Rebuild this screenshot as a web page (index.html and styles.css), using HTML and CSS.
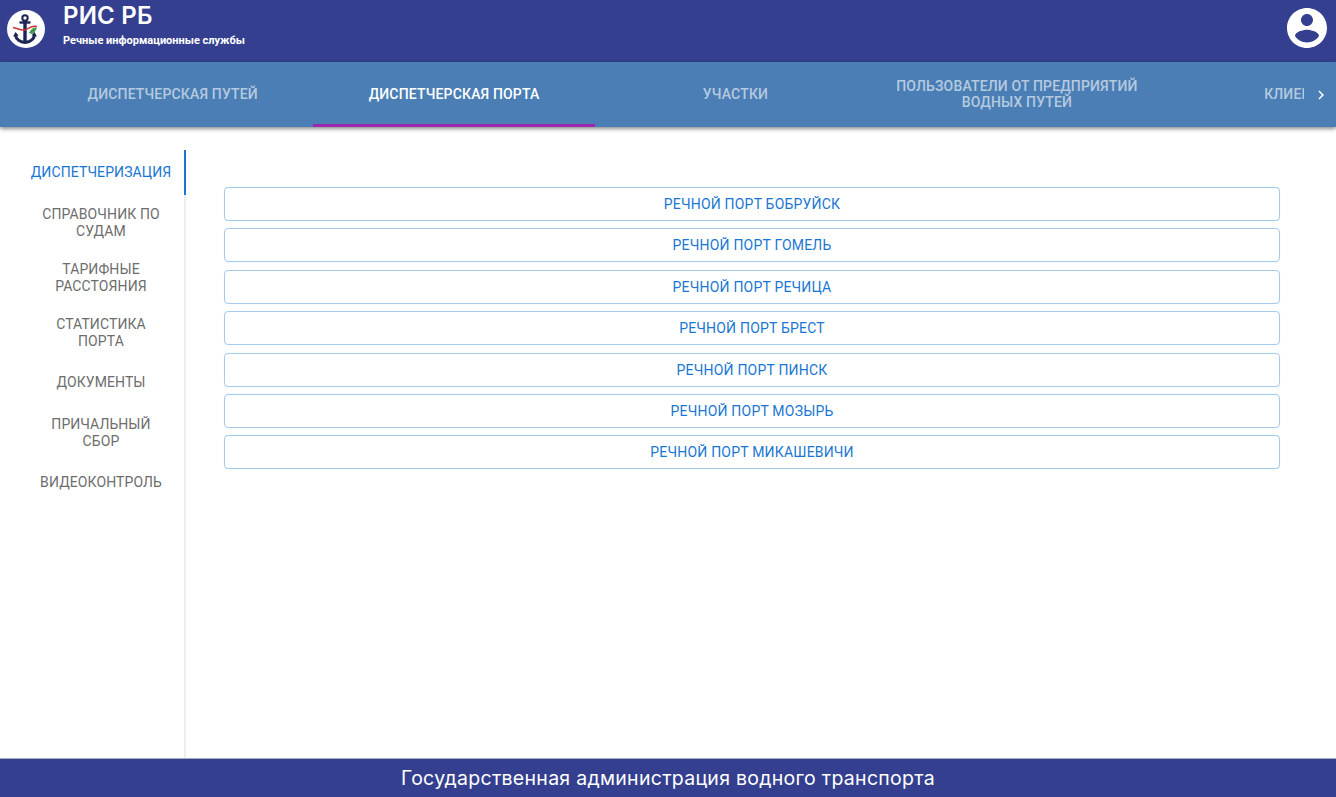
FILE: index.html
```html
<!DOCTYPE html>
<html lang="ru">
<head>
<meta charset="utf-8">
<title>РИС РБ</title>
<link rel="stylesheet" href="styles.css">
</head>
<body>
<header class="top">
  <div class="logo">
    <svg viewBox="0 0 38 38" width="38" height="38" aria-hidden="true">
      <circle cx="19" cy="19" r="19" fill="#fff"/>
      <circle cx="18" cy="8" r="2.700" fill="none" stroke="#1c2554" stroke-width="2"/>
      <path d="M12.500 12.500h11" stroke="#1c2554" stroke-width="2.400" fill="none"/>
      <path d="M18 10v22" stroke="#1c2554" stroke-width="3.400" fill="none"/>
      <path d="M8.500 25c.5 4.500 5 7 9.500 7.500 4.500-.5 9-3 9.500-7.500" stroke="#1c2554" stroke-width="3" fill="none"/>
      <path d="M6 26.500l2.500-4.500 3 3.500zM30 26.500l-2.500-4.500-3 3.500z" fill="#1c2554"/>
      <path d="M6 17.500c4 .5 7 3 11 2.500 4-.5 7-5 13-3.500" stroke="#d0342c" stroke-width="1.500" fill="none"/>
      <path d="M22 23c2-4 4-6 8-5.500-1 3-3 5.500-5 6.500z" fill="#3c9a4a"/>
    </svg>
  </div>
  <div class="brand">
    <div class="brand-title">РИС РБ</div>
    <div class="brand-sub">Речные информационные службы</div>
  </div>
  <div class="avatar">
    <svg viewBox="0 0 24 24" width="48" height="48" aria-hidden="true">
      <path fill="#fff" d="M12 2C6.480 2 2 6.480 2 12s4.480 10 10 10 10-4.480 10-10S17.520 2 12 2zm0 3c1.660 0 3 1.340 3 3s-1.340 3-3 3-3-1.340-3-3 1.340-3 3-3zm0 14.200c-2.500 0-4.710-1.280-6-3.220.030-1.990 4-3.080 6-3.080 1.990 0 5.970 1.090 6 3.080-1.290 1.940-3.500 3.220-6 3.220z"/>
    </svg>
  </div>
</header>
<nav class="tabs">
  <div class="tabs-spacer"></div>
  <div class="tabs-track">
    <a class="tab">Диспетчерская путей</a>
    <a class="tab tab-active">Диспетчерская порта</a>
    <a class="tab">Участки</a>
    <a class="tab">Пользователи от предприятий водных путей</a>
    <a class="tab">Клиенты</a>
  </div>
  <div class="tabs-next">
    <svg viewBox="0 0 24 24" width="18" height="18" aria-hidden="true"><path fill="#fff" d="M10 6 8.590 7.410 13.170 12l-4.580 4.590L10 18l6-6z"/></svg>
  </div>
</nav>
<div class="body">
  <aside class="side">
    <a class="side-item side-active">Диспетчеризация</a>
    <a class="side-item">Справочник по судам</a>
    <a class="side-item">Тарифные расстояния</a>
    <a class="side-item">Статистика<br>порта</a>
    <a class="side-item">Документы</a>
    <a class="side-item">Причальный<br>сбор</a>
    <a class="side-item">Видеоконтроль</a>
  </aside>
  <main class="main">
    <a class="port">Речной порт Бобруйск</a>
    <a class="port">Речной порт Гомель</a>
    <a class="port">Речной порт Речица</a>
    <a class="port">Речной порт Брест</a>
    <a class="port">Речной порт Пинск</a>
    <a class="port">Речной порт Мозырь</a>
    <a class="port">Речной порт Микашевичи</a>
  </main>
</div>
<footer class="foot">Государственная администрация водного транспорта</footer>
</body>
</html>
```
FILE: styles.css
```css
* { box-sizing: border-box; }
html, body { height: 100%; }
body {
  margin: 0;
  height: 797px;
  display: flex;
  flex-direction: column;
  overflow: hidden;
  background: #fff;
  font-family: Roboto, "Liberation Sans", sans-serif;
}
.top {
  height: 62px;
  flex: none;
  display: flex;
  align-items: flex-start;
  background: #34408f;
  color: #fff;
}
.logo { margin: 10px 0 0 7px; width: 38px; height: 38px; flex: none; }
.logo svg { display: block; }
.brand { margin-left: 18px; flex: 1; }
.brand-title {
  font-family: Inter, "Open Sans", sans-serif;
  font-size: 24px;
  font-weight: 600;
  line-height: 28px;
  margin-top: 2px;
  letter-spacing: 0.2px;
}
.brand-sub {
  font-size: 11px;
  font-weight: 700;
  line-height: 14px;
  margin-top: 4px;
}
.avatar { margin: 4px 5px 0 0; width: 48px; height: 48px; flex: none; }
.avatar svg { display: block; }
.tabs {
  height: 65px;
  flex: none;
  display: flex;
  background: #4a7eb5;
  box-shadow: 0 2px 4px rgba(0, 0, 0, 0.45);
  position: relative;
  z-index: 1;
}
.tabs-spacer { width: 32px; flex: none; }
.tabs-track { flex: 1; display: flex; overflow: hidden; }
.tab {
  flex: 0 0 281.4px;
  display: flex;
  align-items: center;
  justify-content: center;
  text-align: center;
  padding: 0 12px;
  font-size: 14px;
  font-weight: 500;
  line-height: 16px;
  letter-spacing: 0.16px;
  text-transform: uppercase;
  color: rgba(255, 255, 255, 0.6);
  border-top: 2px solid transparent;
  border-bottom: 3px solid transparent;
}
.tab-active { color: #fff; border-bottom-color: #9c27b0; }
.tabs-next {
  width: 32px;
  flex: none;
  display: flex;
  align-items: center;
  justify-content: center;
  padding-left: 2px;
}
.body { flex: 1; display: flex; min-height: 0; }
.side {
  width: 186px;
  flex: none;
  margin-top: 23px;
  border-right: 2px solid #eeeeee;
  display: flex;
  flex-direction: column;
}
.side-item {
  min-height: 45px;
  margin-right: -2px;
  padding: 11px 12px 11px 30px;
  display: flex;
  align-items: center;
  justify-content: center;
  text-align: center;
  font-size: 14px;
  line-height: 16.5px;
  letter-spacing: 0.1px;
  text-transform: uppercase;
  color: #6d6d6d;
  border-right: 2px solid transparent;
}
.side-active { color: #1976d2; border-right-color: #1976d2; }
.main {
  flex: 1;
  padding: 60px 56px 0 38px;
  display: flex;
  flex-direction: column;
  gap: 7.4px;
}
.port {
  height: 34px;
  flex: none;
  display: flex;
  align-items: center;
  justify-content: center;
  border: 1px solid #a6cbef;
  border-radius: 4px;
  font-size: 14px;
  letter-spacing: 0.2px;
  text-transform: uppercase;
  color: #1976d2;
  box-shadow: 0 0 1px rgba(25, 118, 210, 0.2);
}
.foot {
  height: 39px;
  flex: none;
  display: flex;
  align-items: center;
  justify-content: center;
  background: #34408f;
  border-top: 1px solid #a9acc0;
  color: #fff;
  font-family: Inter, "Open Sans", sans-serif;
  font-size: 19.5px;
  letter-spacing: 0.28px;
}
```
